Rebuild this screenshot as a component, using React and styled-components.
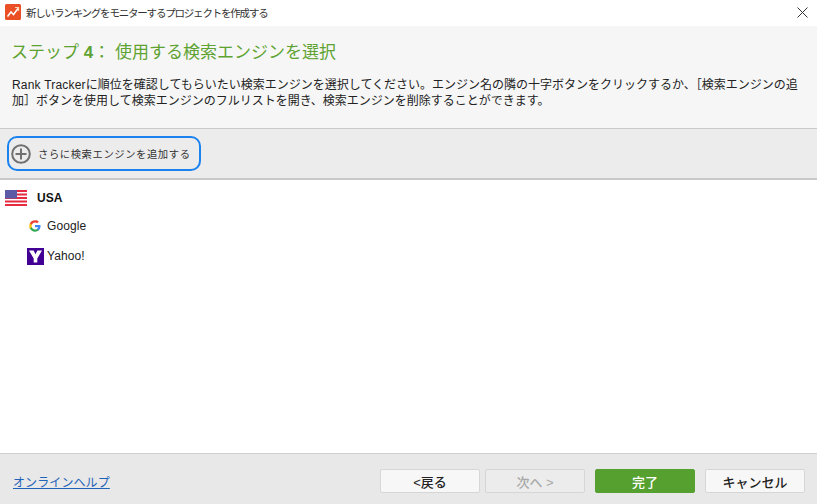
import React from "react";
import styled, { createGlobalStyle } from "styled-components";

const FONT = `"Liberation Sans", "Noto Sans CJK JP", sans-serif`;

const GlobalStyle = createGlobalStyle`
  html, body {
    margin: 0;
    padding: 0;
    background: #fff;
  }
  body {
    font-family: ${FONT};
  }
`;

const Dialog = styled.div`
  width: 817px;
  height: 504px;
  display: flex;
  flex-direction: column;
  overflow: hidden;
  color: #1a1a1a;
`;

const TitleBar = styled.div`
  height: 26px;
  flex: none;
  display: flex;
  align-items: center;
  padding: 0 9px 2px 5px;
  box-sizing: border-box;
  background: #fff;
`;

const TitleText = styled.span`
  margin-left: 5px;
  font-size: 10.5px;
  letter-spacing: -1.2px;
  color: #333;
  flex: 1;
`;

const Header = styled.div`
  height: 102px;
  flex: none;
  box-sizing: border-box;
  padding: 16px 12px 0 11px;
  background: #f6f6f6;
`;

const StepTitle = styled.h1`
  margin: 0;
  font-size: 17px;
  line-height: 22px;
  font-weight: 400;
  color: #5ea332;
  white-space: nowrap;
  b {
    font-weight: 700;
  }
`;

const Description = styled.p`
  margin: 13px 0 0 1px;
  font-size: 12px;
  line-height: 16px;
  color: #222;
  white-space: nowrap;
`;

const Latin = styled.span`
  letter-spacing: 0.2px;
`;

const Toolbar = styled.div`
  height: 52px;
  flex: none;
  box-sizing: border-box;
  display: flex;
  align-items: center;
  padding: 0 0 0 7px;
  background: #ececec;
  border-top: 1px solid #c9c9c9;
  border-bottom: 2px solid #c9c9c9;
`;

const AddButton = styled.button`
  width: 194px;
  height: 35px;
  box-sizing: border-box;
  display: flex;
  align-items: center;
  gap: 7px;
  padding: 0 0 0 2px;
  background: #ececec;
  border: 2px solid #1a83f0;
  border-radius: 10px;
  font-family: ${FONT};
  font-size: 10.3px;
  letter-spacing: 0.6px;
  color: #333;
`;

const EngineList = styled.div`
  flex: 1;
  background: #fff;
  padding-top: 8px;
`;

const CountryRow = styled.div`
  height: 20px;
  display: flex;
  align-items: center;
  gap: 10px;
  padding-left: 5px;
  font-size: 12px;
  font-weight: 700;
  color: #111;
`;

const EngineRow = styled.div`
  height: 30px;
  display: flex;
  align-items: center;
  padding-left: ${(p) => p.$indent}px;
  gap: ${(p) => p.$gap}px;
  font-size: 12px;
  letter-spacing: 0.1px;
  color: #222;
`;

const GoogleRow = styled(EngineRow)`
  margin-top: 3px;
`;

const Footer = styled.div`
  height: 51px;
  flex: none;
  box-sizing: border-box;
  display: flex;
  align-items: center;
  justify-content: space-between;
  padding: 4px 12px 0 13px;
  background: #e8e8e8;
  border-top: 1px solid #cfcfcf;
`;

const HelpLink = styled.a`
  font-size: 12px;
  letter-spacing: 0.1px;
  color: #1f63b8;
  text-decoration: underline;
`;

const Buttons = styled.div`
  display: flex;
  align-items: center;
`;

const FooterButton = styled.button`
  width: 100px;
  height: 24px;
  margin-left: ${(p) => p.$gap || 0}px;
  padding: 0;
  box-sizing: border-box;
  border-radius: 2px;
  border: 1px solid ${(p) => (p.$primary ? "#55a02f" : "#d6d6d6")};
  background: ${(p) => (p.$primary ? "#55a02f" : p.disabled ? "#ececec" : "#f7f7f7")};
  color: ${(p) => (p.$primary ? "#fff" : p.disabled ? "#a8a8a8" : "#222")};
  font-family: ${FONT};
  font-size: 13px;
  font-weight: 500;
`;

const AppIcon = () => (
  <svg width="16" height="16" viewBox="0 0 16 16">
    <rect width="16" height="16" rx="1.5" fill="#ea4f25" />
    <path d="M2.5 12.5 6 8l2.5 2.5L13 4.5" fill="none" stroke="#fff" strokeWidth="1.5" />
    <path d="M10 3.5h3.5V7" fill="none" stroke="#ffd9b0" strokeWidth="1.2" />
  </svg>
);

const CloseIcon = () => (
  <svg width="11" height="11" viewBox="0 0 11 11">
    <path d="M.5.5l10 10M10.5.5l-10 10" stroke="#333" strokeWidth="1" fill="none" />
  </svg>
);

const PlusIcon = () => (
  <svg width="20" height="20" viewBox="0 0 20 20">
    <circle cx="10" cy="10" r="8.8" fill="none" stroke="#707070" strokeWidth="2" />
    <path d="M10 4.5v11M4.5 10h11" stroke="#707070" strokeWidth="2" />
  </svg>
);

const UsaFlag = () => (
  <svg width="22" height="16" viewBox="0 0 22 16">
    <rect width="22" height="16" fill="#fff" />
    <path d="M0 1h22M0 4.500h22M0 8h22M0 11.500h22M0 15h22" stroke="#e62a42" strokeWidth="1.8" />
    <rect width="12" height="8.500" fill="#5a5aa6" />
  </svg>
);

const GoogleIcon = () => (
  <svg width="12" height="12" viewBox="0 0 48 48">
    <path fill="#4285f4" d="M46 24.500c0-1.600-.1-3.100-.4-4.500H24v8.500h12.400c-.5 2.900-2.200 5.300-4.600 6.900v5.700h7.400C43.500 36.700 46 31.100 46 24.500z" />
    <path fill="#34a853" d="M24 47c6.200 0 11.400-2 15.200-5.600l-7.400-5.700c-2 1.400-4.700 2.200-7.800 2.200-6 0-11-4-12.800-9.500H3.600v5.900C7.400 41.800 15.100 47 24 47z" />
    <path fill="#fbbc05" d="M11.200 28.900c-.5-1.400-.7-3-.7-4.900s.3-3.400.7-4.900v-5.900H3.600C2 16.300 1 20 1 24s1 7.700 2.600 10.800l7.600-5.900z" />
    <path fill="#ea4335" d="M24 9.600c3.400 0 6.400 1.200 8.800 3.400l6.600-6.600C35.400 2.900 30.200 1 24 1 15.100 1 7.400 6.200 3.600 13.200l7.600 5.900C13 13.600 18 9.600 24 9.600z" />
  </svg>
);

const YahooIcon = () => (
  <svg width="17" height="17" viewBox="0 0 17 17">
    <rect width="17" height="17" fill="#410093" />
    <path d="M2 2.500h4.600l1.900 3.800 1.900-3.800H15L10.300 10.500v4H6.700v-4z" fill="#fff" />
  </svg>
);

export default function App() {
  return (
    <>
      <GlobalStyle />
      <Dialog>
        <TitleBar>
          <AppIcon />
          <TitleText>新しいランキングをモニターするプロジェクトを作成する</TitleText>
          <CloseIcon />
        </TitleBar>
        <Header>
          <StepTitle>
            ステップ <b>4</b>： 使用する検索エンジンを選択
          </StepTitle>
          <Description>
            <Latin>Rank Tracker</Latin>に順位を確認してもらいたい検索エンジンを選択してください。エンジン名の隣の十字ボタンをクリックするか、［検索エンジンの追
            <br />
            加］ボタンを使用して検索エンジンのフルリストを開き、検索エンジンを削除することができます。
          </Description>
        </Header>
        <Toolbar>
          <AddButton>
            <PlusIcon />
            さらに検索エンジンを追加する
          </AddButton>
        </Toolbar>
        <EngineList>
          <CountryRow>
            <UsaFlag />
            USA
          </CountryRow>
          <GoogleRow $indent={29} $gap={6}>
            <GoogleIcon />
            Google
          </GoogleRow>
          <EngineRow $indent={27} $gap={3}>
            <YahooIcon />
            Yahoo!
          </EngineRow>
        </EngineList>
        <Footer>
          <HelpLink href="#">オンラインヘルプ</HelpLink>
          <Buttons>
            <FooterButton>&lt;戻る</FooterButton>
            <FooterButton $gap={5} disabled>
              次へ &gt;
            </FooterButton>
            <FooterButton $gap={10} $primary>
              完了
            </FooterButton>
            <FooterButton $gap={10}>キャンセル</FooterButton>
          </Buttons>
        </Footer>
      </Dialog>
    </>
  );
}
